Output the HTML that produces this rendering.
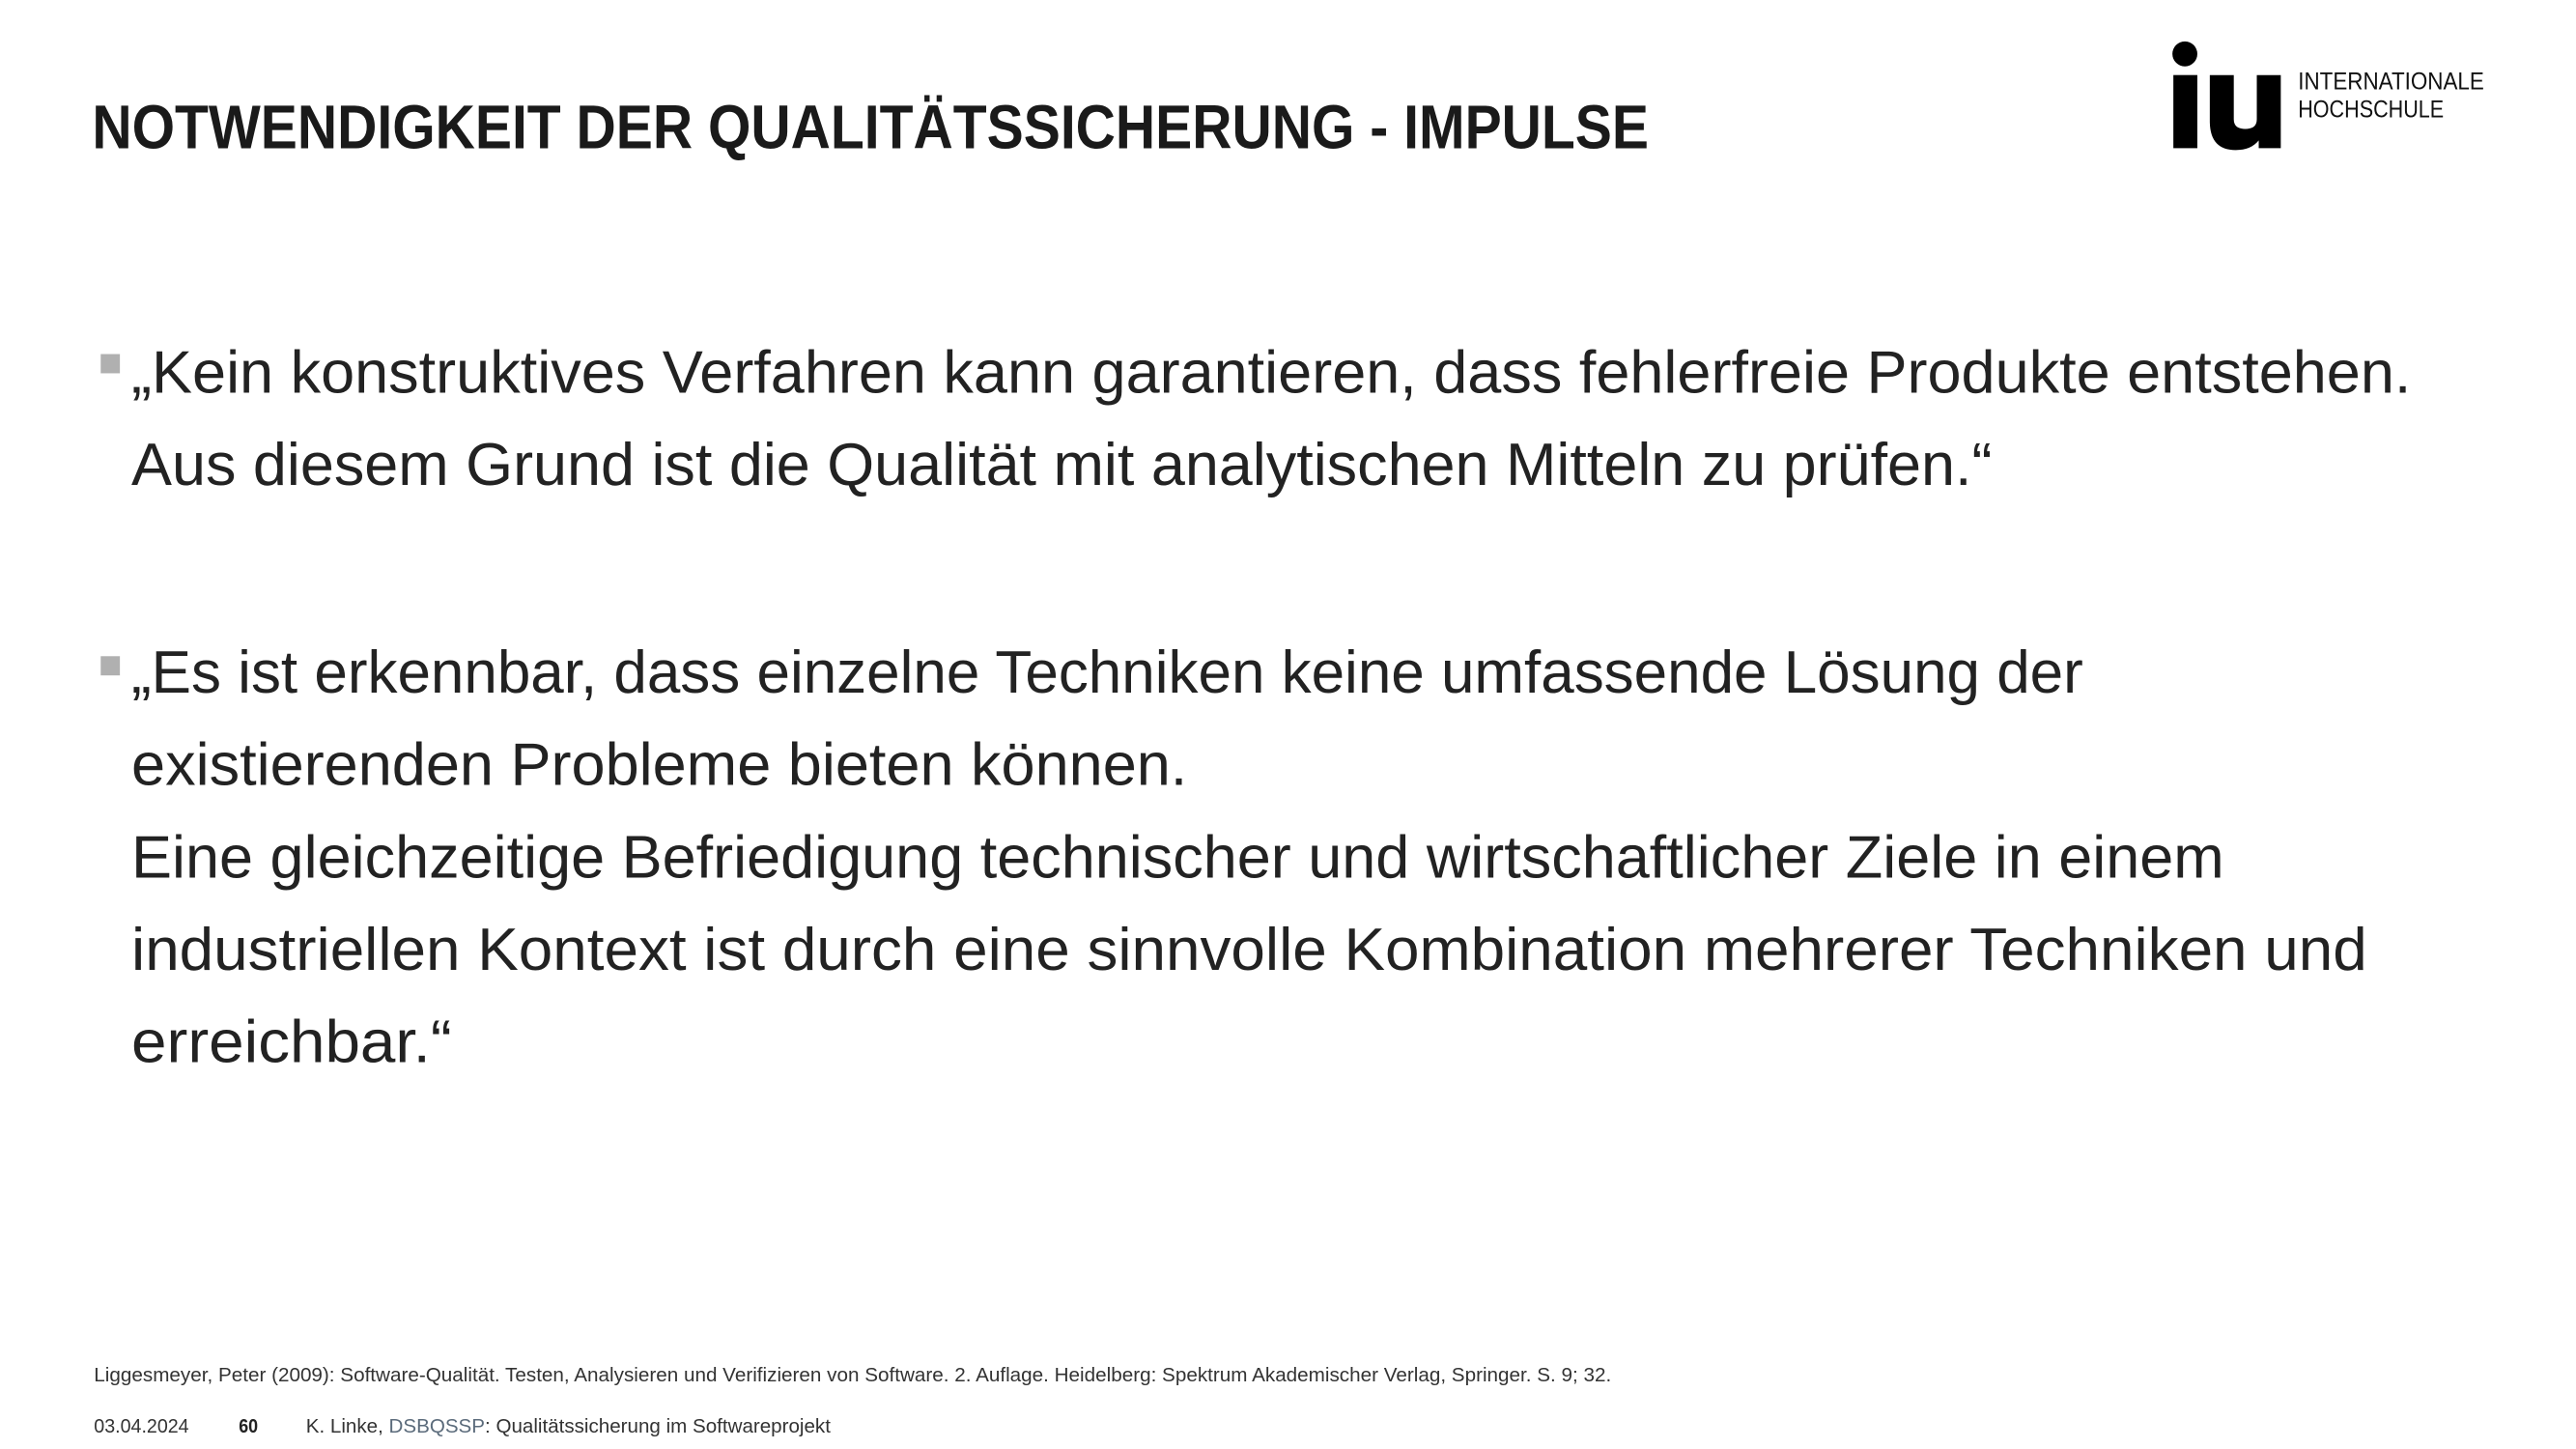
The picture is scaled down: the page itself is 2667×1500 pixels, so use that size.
<!DOCTYPE html>
<html><head><meta charset="utf-8"><style>html,body{margin:0;padding:0;background:#fff}svg{display:block}</style></head>
<body>
<svg width="2667" height="1500" viewBox="0 0 2667 1500" xmlns="http://www.w3.org/2000/svg" font-family="Liberation Sans, sans-serif">
<rect width="2667" height="1500" fill="#fff"/>
<g transform="scale(0.993,0.996)">
<text x="96" y="154" font-size="64" font-weight="bold" fill="#1a1a1a" textLength="1623" lengthAdjust="spacingAndGlyphs">NOTWENDIGKEIT DER QUALITÄTSSICHERUNG - IMPULSE</text>
<circle cx="2278" cy="56" r="13" fill="#000"/>
<rect x="2266" y="78" width="25" height="76" fill="#000"/>
<path d="M2304 78 h25 v46 q0 10 12 10 q12 0 12 -10 v-46 h25 v76 h-23 v-8 q-8 10 -24 10 q-27 0 -27 -30 z" fill="#000"/>
<text x="2396" y="93" font-size="25" fill="#111" textLength="194" lengthAdjust="spacingAndGlyphs">INTERNATIONALE</text>
<text x="2396" y="122" font-size="25" fill="#111" textLength="152" lengthAdjust="spacingAndGlyphs">HOCHSCHULE</text>
<rect x="105" y="368" width="20" height="20" fill="#b0b0b0"/>
<rect x="105" y="682" width="20" height="20" fill="#b0b0b0"/>
<g font-size="62" fill="#222">
<text x="137" y="408" textLength="2377" lengthAdjust="spacingAndGlyphs">„Kein konstruktives Verfahren kann garantieren, dass fehlerfreie Produkte entstehen.</text>
<text x="137" y="504" textLength="1940" lengthAdjust="spacingAndGlyphs">Aus diesem Grund ist die Qualität mit analytischen Mitteln zu prüfen.“</text>
<text x="137" y="720" textLength="2035" lengthAdjust="spacingAndGlyphs">„Es ist erkennbar, dass einzelne Techniken keine umfassende Lösung der</text>
<text x="137" y="816" textLength="1101" lengthAdjust="spacingAndGlyphs">existierenden Probleme bieten können.</text>
<text x="137" y="912" textLength="2182" lengthAdjust="spacingAndGlyphs">Eine gleichzeitige Befriedigung technischer und wirtschaftlicher Ziele in einem</text>
<text x="137" y="1008" textLength="2331" lengthAdjust="spacingAndGlyphs">industriellen Kontext ist durch eine sinnvolle Kombination mehrerer Techniken und</text>
<text x="137" y="1104" textLength="334" lengthAdjust="spacingAndGlyphs">erreichbar.“</text>
</g>
<text x="98" y="1436" font-size="20" fill="#333" textLength="1582" lengthAdjust="spacingAndGlyphs">Liggesmeyer, Peter (2009): Software-Qualität. Testen, Analysieren und Verifizieren von Software. 2. Auflage. Heidelberg: Spektrum Akademischer Verlag, Springer. S. 9; 32.</text>
<text x="98" y="1489" font-size="20" fill="#333" textLength="99" lengthAdjust="spacingAndGlyphs">03.04.2024</text>
<text x="249" y="1489" font-size="20" font-weight="bold" fill="#222" textLength="20" lengthAdjust="spacingAndGlyphs">60</text>
<text x="319" y="1489" font-size="20" fill="#333" textLength="547" lengthAdjust="spacingAndGlyphs">K. Linke, <tspan fill="#5b6b7b">DSBQSSP</tspan>: Qualitätssicherung im Softwareprojekt</text>
</g>
</svg>
</body></html>
